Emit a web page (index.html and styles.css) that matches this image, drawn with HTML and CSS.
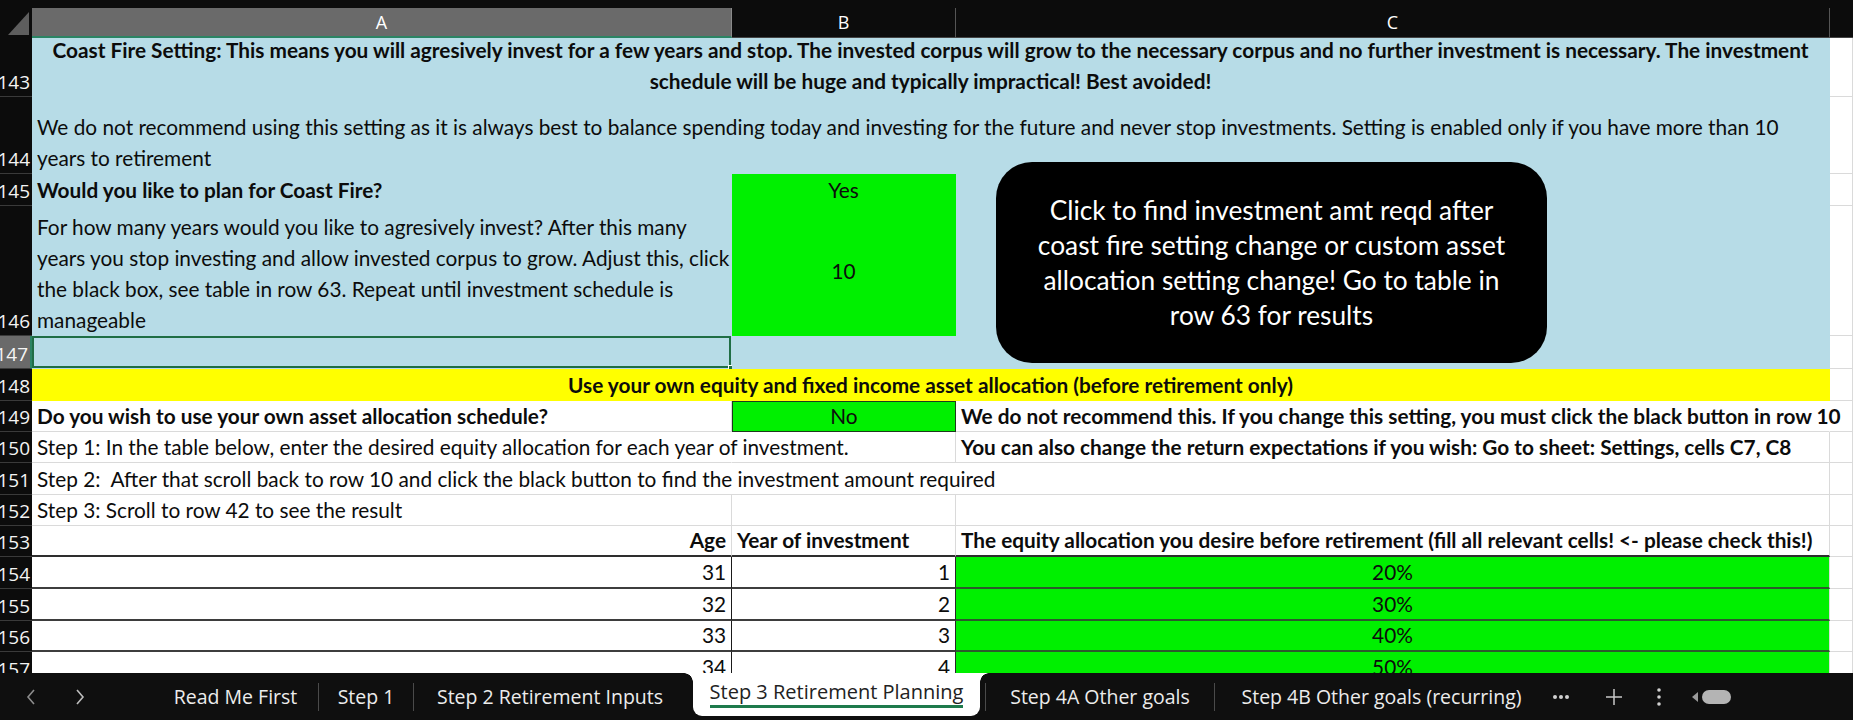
FILE: index.html
```html
<!DOCTYPE html>
<html lang="en">
<head>
    <meta charset="UTF-8">
    <meta name="viewport" content="width=device-width, initial-scale=1.0">
    <title>Step 3 Retirement Planning</title>
    <link rel="stylesheet" href="styles.css">
</head>
<body>
    <div class="topstrip"></div>

    <div class="sheet">
        <!-- Column headers -->
        <div class="corner">
            <svg width="32" height="30" viewBox="0 0 32 30"><polygon points="8,27 29,27 29,4" fill="#5e5e5e"/></svg>
        </div>
        <div class="colhead active">A</div>
        <div class="colhead">B</div>
        <div class="colhead">C</div>
        <div class="colhead last"></div>

        <!-- 143 -->
        <div class="rh">143</div>
        <div class="cell blue bold center span3">
            <span>Coast Fire Setting: This means you will agresively invest for a few years and stop. The invested corpus will grow to the necessary corpus and no further investment is necessary. The investment</span>
            <span>schedule will be huge and typically impractical! Best avoided!</span>
        </div>
        <div class="cell"></div>

        <!-- 144 -->
        <div class="rh">144</div>
        <div class="cell blue span3">
            <span>We do not recommend using this setting as it is always best to balance spending today and investing for the future and never stop investments. Setting is enabled only if you have more than 10</span>
            <span>years to retirement</span>
        </div>
        <div class="cell"></div>

        <!-- 145 -->
        <div class="rh">145</div>
        <div class="cell blue bold">Would you like to plan for Coast Fire?</div>
        <div class="cell green center">Yes</div>
        <div class="cell blue"></div>
        <div class="cell"></div>

        <!-- 146 -->
        <div class="rh">146</div>
        <div class="cell blue">
            <span>For how many years would you like to agresively invest? After this many</span>
            <span>years you stop investing and allow invested corpus to grow. Adjust this, click</span>
            <span>the black box, see table in row 63. Repeat until investment schedule is</span>
            <span>manageable</span>
        </div>
        <div class="cell green center middle">10</div>
        <div class="cell blue"></div>
        <div class="cell"></div>

        <!-- 147 -->
        <div class="rh current">147</div>
        <div class="cell blue selected"><span class="handle"></span></div>
        <div class="cell blue"></div>
        <div class="cell blue"></div>
        <div class="cell"></div>

        <!-- 148 -->
        <div class="rh">148</div>
        <div class="cell yellow bold center span3">Use your own equity and fixed income asset allocation (before retirement only)</div>
        <div class="cell"></div>

        <!-- 149 -->
        <div class="rh">149</div>
        <div class="cell bold">Do you wish to use your own asset allocation schedule?</div>
        <div class="cell green center boxed">No</div>
        <div class="cell bold spill">We do not recommend this. If you change this setting, you must click the black button in row 10</div>
        <div class="cell"></div>

        <!-- 150 -->
        <div class="rh">150</div>
        <div class="cell spill">Step 1: In the table below, enter the desired equity allocation for each year of investment.</div>
        <div class="cell"></div>
        <div class="cell bold">You can also change the return expectations if you wish: Go to sheet: Settings, cells C7, C8</div>
        <div class="cell"></div>

        <!-- 151 -->
        <div class="rh">151</div>
        <div class="cell span3">Step 2:&nbsp; After that scroll back to row 10 and click the black button to find the investment amount required</div>
        <div class="cell"></div>

        <!-- 152 -->
        <div class="rh">152</div>
        <div class="cell">Step 3: Scroll to row 42 to see the result</div>
        <div class="cell"></div>
        <div class="cell"></div>
        <div class="cell"></div>

        <!-- 153 table head -->
        <div class="rh">153</div>
        <div class="cell bold right thead">Age</div>
        <div class="cell bold thead">Year of investment</div>
        <div class="cell bold thead">The equity allocation you desire before retirement (fill all relevant cells! &lt;- please check this!)</div>
        <div class="cell"></div>

        <!-- 154 - 157 table body -->
        <div class="rh">154</div>
        <div class="cell right trow age">31</div>
        <div class="cell right trow year">1</div>
        <div class="cell green center trow pct">20%</div>
        <div class="cell"></div>

        <div class="rh">155</div>
        <div class="cell right trow age">32</div>
        <div class="cell right trow year">2</div>
        <div class="cell green center trow pct">30%</div>
        <div class="cell"></div>

        <div class="rh">156</div>
        <div class="cell right trow age">33</div>
        <div class="cell right trow year">3</div>
        <div class="cell green center trow pct">40%</div>
        <div class="cell"></div>

        <div class="rh">157</div>
        <div class="cell right trow age">34</div>
        <div class="cell right trow year">4</div>
        <div class="cell green center trow pct">50%</div>
        <div class="cell"></div>

        <!-- Macro button floating over the sheet -->
        <div class="macro-btn">
            <span>Click to find investment amt reqd after</span>
            <span>coast fire setting change or custom asset</span>
            <span>allocation setting change! Go to table in</span>
            <span>row 63 for results</span>
        </div>
    </div>

    <!-- Sheet tabs -->
    <div class="tabs">
        <div class="nav">
            <svg width="12" height="18" viewBox="0 0 12 18"><path d="M9 2 L3 9 L9 16" fill="none" stroke="#8c8c8c" stroke-width="1.6"/></svg>
            <svg width="12" height="18" viewBox="0 0 12 18"><path d="M3 2 L9 9 L3 16" fill="none" stroke="#bdbdbd" stroke-width="1.6"/></svg>
        </div>
        <div class="tab t1">Read Me First</div>
        <div class="sep"></div>
        <div class="tab t2">Step 1</div>
        <div class="sep"></div>
        <div class="tab t3">Step 2 Retirement Inputs</div>
        <div class="tab active"><span>Step 3 Retirement Planning</span></div>
        <div class="sep"></div>
        <div class="tab t5">Step 4A Other goals</div>
        <div class="sep"></div>
        <div class="tab t6">Step 4B Other goals (recurring)</div>
        <div class="tool dots">
            <svg width="18" height="6" viewBox="0 0 18 6"><circle cx="3" cy="3" r="2" fill="#d0d0d0"/><circle cx="9" cy="3" r="2" fill="#d0d0d0"/><circle cx="15" cy="3" r="2" fill="#d0d0d0"/></svg>
        </div>
        <div class="tool plus">
            <svg width="18" height="18" viewBox="0 0 18 18"><path d="M9 1 V17 M1 9 H17" stroke="#c8c8c8" stroke-width="1.5"/></svg>
        </div>
        <div class="tool more">
            <svg width="6" height="20" viewBox="0 0 6 20"><circle cx="3" cy="3" r="1.8" fill="#d0d0d0"/><circle cx="3" cy="10" r="1.8" fill="#d0d0d0"/><circle cx="3" cy="17" r="1.8" fill="#d0d0d0"/></svg>
        </div>
        <div class="scroller">
            <svg width="8" height="12" viewBox="0 0 8 12"><polygon points="7,1 1,6 7,11" fill="#9a9a9a"/></svg>
            <span class="pill"></span>
        </div>
    </div>
</body>
</html>
```

FILE: styles.css
```css
* {
    margin: 0;
    padding: 0;
    box-sizing: border-box;
}

body {
    font-family: Lato, "Liberation Sans", sans-serif;
    background-color: #fff;
    color: #0c0c0c;
    overflow: hidden;
}

.topstrip {
    height: 8px;
    background-color: #0c0c0c;
}

/* Sheet grid */
.sheet {
    position: relative;
    display: grid;
    grid-template-columns: 32px 700px 224px 874px 1fr;
    grid-template-rows: 30px 59px 77px 32px 130px 33px 32px 31px 31px 32px 31px 31px 32px 32px 31px 32px;
    height: 665px;
    overflow: hidden;
    font-size: 20.8px;
    line-height: 31px;
}

.corner {
    background-color: #0c0c0c;
}

.corner svg {
    display: block;
}

.colhead {
    display: flex;
    align-items: center;
    justify-content: center;
    background-color: #0c0c0c;
    color: #fff;
    font-family: "Open Sans", sans-serif;
    font-size: 18px;
    border-right: 1px solid #555;
    border-bottom: 1px solid #444;
}

.colhead.active {
    background-color: #6a6a6a;
    border-right-color: #8a8a8a;
    border-bottom: 2px solid #2b8464;
}

.colhead.last {
    border-right: none;
}

/* Row numbers */
.rh {
    display: flex;
    justify-content: flex-end;
    align-items: flex-end;
    padding: 0 2px 2px 0;
    background-color: #0c0c0c;
    color: #f4f4f4;
    font-family: "Open Sans", sans-serif;
    font-size: 19px;
    line-height: 24px;
    border-bottom: 1px solid #3a3a3a;
    overflow: hidden;
}

.rh.current {
    background-color: #6a6a6a;
    border-right: 2px solid #2b8464;
}

/* Cells */
.cell {
    position: relative;
    display: flex;
    flex-direction: column;
    justify-content: flex-end;
    min-width: 0;
    padding: 0 5px;
    white-space: nowrap;
    border-right: 1px solid #dadada;
    border-bottom: 1px solid #dadada;
}

.spill {
    border-right-color: transparent;
}

.span3 {
    grid-column: span 3;
}

.bold {
    font-weight: 700;
}

.center {
    align-items: center;
    text-align: center;
}

.right {
    align-items: flex-end;
}

.middle {
    justify-content: center;
}

.blue {
    background-color: #b7dce7;
    border-color: #b7dce7;
}

.green {
    background-color: #00f000;
    border-color: #00f000;
}

.yellow {
    background-color: #ffff00;
    border-color: #ffff00;
}

.boxed {
    border: 1px solid #1d3a1d;
}

.selected {
    box-shadow: inset 0 0 0 2px #1f6e45;
}

.selected .handle {
    position: absolute;
    right: -4px;
    bottom: -4px;
    width: 7px;
    height: 7px;
    background-color: #1f6e45;
    border: 1px solid #fff;
}

/* Allocation table */
.thead {
    border-bottom: 2px solid #2e2e2e;
}

.trow {
    border-bottom: 2px solid #3d3d3d;
}

.trow.age {
    border-right: 1px solid #1a1a1a;
}

.trow.year {
    border-right: 1px solid #2a2a2a;
}

.trow.pct {
    border-right: 1px solid #dadada;
    border-bottom-color: #2c5a2c;
}

/* Macro button */
.macro-btn {
    position: absolute;
    left: 996px;
    top: 154px;
    width: 551px;
    height: 201px;
    display: flex;
    flex-direction: column;
    align-items: center;
    justify-content: center;
    background-color: #000;
    border-radius: 36px;
    color: #fff;
    font-size: 26.3px;
    line-height: 35px;
    white-space: nowrap;
}

/* Sheet tabs */
.tabs {
    display: flex;
    align-items: center;
    height: 47px;
    background-color: #0f0f0f;
    color: #ececec;
    font-family: "Open Sans", sans-serif;
    font-size: 19.5px;
}

.nav {
    display: flex;
    align-items: center;
    gap: 37px;
    width: 153px;
    padding-left: 25px;
}

.nav svg {
    display: block;
}

.tab {
    display: flex;
    align-items: center;
    justify-content: center;
    height: 100%;
    white-space: nowrap;
}

.t1 {
    width: 165px;
}

.t2 {
    width: 94px;
}

.t3 {
    width: 272px;
    margin-right: 7px;
}

.t5 {
    width: 228px;
}

.t6 {
    width: 333px;
}

.sep {
    width: 1px;
    height: 28px;
    background-color: #4a4a4a;
}

.tab.active {
    position: relative;
    align-self: flex-start;
    width: 287px;
    height: 43px;
    margin-right: 5px;
    background-color: #fff;
    color: #222;
    font-size: 20px;
    border-radius: 0 0 9px 9px;
    padding-bottom: 2px;
}

.tab.active span {
    border-bottom: 3px solid #1e7a4c;
    line-height: 26px;
}

.tab.active::before,
.tab.active::after {
    content: "";
    position: absolute;
    top: 0;
    width: 9px;
    height: 9px;
}

.tab.active::before {
    left: -9px;
    background: radial-gradient(circle at 0 100%, #0f0f0f 8.5px, #fff 9px);
}

.tab.active::after {
    right: -9px;
    background: radial-gradient(circle at 100% 100%, #0f0f0f 8.5px, #fff 9px);
}

.tool {
    display: flex;
    align-items: center;
    justify-content: center;
}

.tool svg {
    display: block;
}

.dots {
    width: 26px;
    margin-left: 0;
}

.plus {
    width: 26px;
    margin-left: 27px;
}

.more {
    width: 10px;
    margin-left: 27px;
}

.scroller {
    display: flex;
    align-items: center;
    gap: 3px;
    margin-left: 27px;
}

.scroller svg {
    display: block;
}

.pill {
    display: block;
    width: 29px;
    height: 14px;
    border-radius: 7px;
    background-color: #b4b4b4;
}
```
